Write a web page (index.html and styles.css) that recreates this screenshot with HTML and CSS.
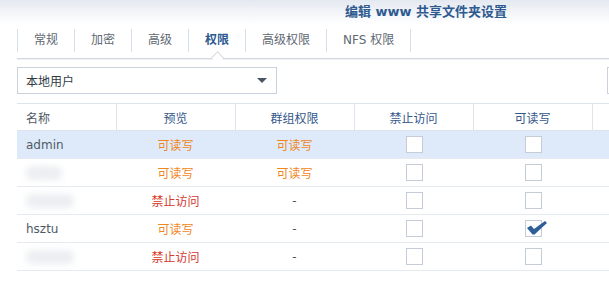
FILE: index.html
```html
<!DOCTYPE html>
<html lang="zh-CN">
<head>
  <meta charset="UTF-8">
  <meta name="viewport" content="width=device-width, initial-scale=1">
  <title>编辑 www 共享文件夹设置</title>
  <link rel="stylesheet" href="styles.css">
</head>
<body>
  <div class="header">编辑 www 共享文件夹设置</div>

  <div class="tabbar">
    <div class="tab">常规</div>
    <div class="tab">加密</div>
    <div class="tab">高级</div>
    <div class="tab active">权限</div>
    <div class="tab">高级权限</div>
    <div class="tab">NFS 权限</div>
  </div>

  <div class="toolbar">
    <div class="select">
      <span>本地用户</span>
      <span class="arrow"></span>
    </div>
    <div class="search"></div>
  </div>

  <table class="grid">
    <colgroup>
      <col style="width: 99px">
      <col style="width: 119px">
      <col style="width: 119px">
      <col style="width: 119px">
      <col style="width: 119px">
      <col>
    </colgroup>
    <thead>
      <tr>
        <th class="name">名称</th>
        <th>预览</th>
        <th>群组权限</th>
        <th>禁止访问</th>
        <th>可读写</th>
        <th></th>
      </tr>
    </thead>
    <tbody>
      <tr class="selected">
        <td class="name">admin</td>
        <td class="rw">可读写</td>
        <td class="rw">可读写</td>
        <td><span class="check"></span></td>
        <td><span class="check"></span></td>
        <td></td>
      </tr>
      <tr>
        <td class="name"><span class="blur short"></span></td>
        <td class="rw">可读写</td>
        <td class="rw">可读写</td>
        <td><span class="check"></span></td>
        <td><span class="check"></span></td>
        <td></td>
      </tr>
      <tr>
        <td class="name"><span class="blur"></span></td>
        <td class="deny">禁止访问</td>
        <td>-</td>
        <td><span class="check"></span></td>
        <td><span class="check"></span></td>
        <td></td>
      </tr>
      <tr>
        <td class="name">hsztu</td>
        <td class="rw">可读写</td>
        <td>-</td>
        <td><span class="check"></span></td>
        <td>
          <span class="check checked">
            <svg viewBox="0 0 20 14" width="20" height="14">
              <path d="M0 7 L4 4.5 L7 8 L18 0 L20 2 L7.5 13.5 L5.5 13.5 Z" fill="#2f5e98"/>
            </svg>
          </span>
        </td>
        <td></td>
      </tr>
      <tr>
        <td class="name"><span class="blur"></span></td>
        <td class="deny">禁止访问</td>
        <td>-</td>
        <td><span class="check"></span></td>
        <td><span class="check"></span></td>
        <td></td>
      </tr>
    </tbody>
  </table>
</body>
</html>
```

FILE: styles.css
```css
html, body {
  margin: 0;
  padding: 0;
  overflow: hidden;
  background: #fff;
  font-family: 'DejaVu Sans', 'Noto Sans CJK SC', sans-serif;
  font-size: 12px;
  color: #505a66;
}

.header {
  height: 24px;
  line-height: 24px;
  padding-left: 345px;
  background: linear-gradient(#e4e9f1, #fff);
  color: #2f5a8f;
  font-size: 13px;
  font-weight: bold;
}

.tabbar {
  display: flex;
  margin-left: 17px;
  padding: 5px 0 6px;
  border-bottom: 1px solid #d3d8de;
  box-shadow: 0 1px 0 #eef0f3;
  position: relative;
}

.tab {
  height: 23px;
  line-height: 23px;
  padding: 0 16px;
  border-right: 1px solid #d6dee7;
  color: #606872;
  white-space: nowrap;
}

.tab:first-child {
  border-left: 1px solid #d6dee7;
}

.tab.active {
  color: #2c5a90;
  font-weight: bold;
  position: relative;
}

.tab.active::after {
  content: '';
  position: absolute;
  left: 50%;
  bottom: -10px;
  width: 8px;
  height: 8px;
  margin-left: -4px;
  background: #fff;
  border-left: 1px solid #d3d8de;
  border-top: 1px solid #d3d8de;
  transform: rotate(45deg);
}

.toolbar {
  display: flex;
  margin: 8px 0 0 17px;
  gap: 330px;
}

.select {
  box-sizing: border-box;
  width: 260px;
  height: 27px;
  padding: 0 9px 0 8px;
  border: 1px solid #c9d2dc;
  display: flex;
  align-items: center;
  justify-content: space-between;
  color: #333b45;
  flex-shrink: 0;
}

.arrow {
  width: 0;
  height: 0;
  border-left: 5px solid transparent;
  border-right: 5px solid transparent;
  border-top: 5px solid #4a5563;
}

.search {
  flex: 1;
  height: 25px;
  border: 1px solid #c9d2dc;
  border-right: none;
}

.grid {
  margin: 9px 0 0 17px;
  width: 592px;
  table-layout: fixed;
  border-collapse: collapse;
}

.grid th {
  height: 26px;
  padding: 0;
  font-weight: normal;
  color: #34578a;
  text-align: center;
  border-top: 1px solid #dde4ec;
  border-bottom: 1px solid #dde4ec;
  border-left: 1px solid #dde4ec;
}

.grid th:first-child {
  border-left: none;
}

.grid td {
  height: 27px;
  padding: 0;
  text-align: center;
  border-bottom: 1px solid #e5eaf0;
  color: #555;
}

.grid .name {
  text-align: left;
  padding-left: 9px;
  color: #505a66;
}

.grid tr.selected td {
  background: #deeaf9;
}

.rw {
  color: #f0871e !important;
}

.deny {
  color: #d6392c !important;
}

.check {
  display: inline-block;
  width: 15px;
  height: 15px;
  border: 1px solid #c3ccd7;
  background: #fff;
  vertical-align: middle;
  position: relative;
  left: 1px;
}

.check svg {
  position: absolute;
  left: 1px;
  top: 0;
}

.blur {
  display: inline-block;
  width: 48px;
  height: 14px;
  background: #eceef1;
  border-radius: 6px;
  filter: blur(3px);
  vertical-align: middle;
}

.blur.short {
  width: 36px;
}
```
